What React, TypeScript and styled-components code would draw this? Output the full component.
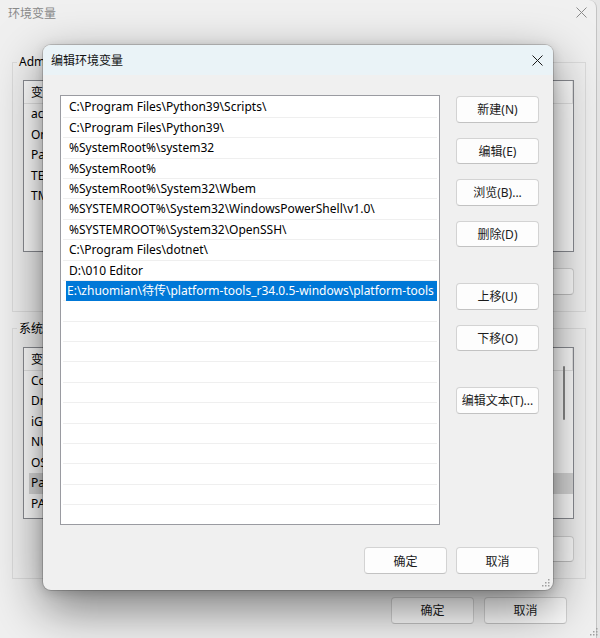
import React from "react";
import styled, { createGlobalStyle } from "styled-components";

const FONT = `"Noto Sans", "Noto Sans CJK SC", sans-serif`;

const GlobalStyle = createGlobalStyle`
  html, body { margin: 0; padding: 0; }
  body {
    width: 600px; height: 638px; overflow: hidden;
    background: #e4e4e4;
    font-family: ${FONT};
    font-size: 12px;
    color: #000;
  }
  * { box-sizing: border-box; }
`;

const Desktop = styled.div`
  position: relative;
  width: 600px;
  height: 638px;
  overflow: hidden;
  background: #e6e6e6;
`;

/* ---------- background window (环境变量) ---------- */

const BgWindow = styled.div`
  width: 597px;
  height: 638px;
  background: #f0f0f0;
  border-right: 1px solid #c4c4c4;
  border-top-right-radius: 8px;
  display: flex;
  flex-direction: column;
`;

const BgTitleBar = styled.div`
  height: 25px;
  flex: none;
  display: flex;
  align-items: center;
  justify-content: space-between;
  padding: 0 9px 0 8px;
  color: #8a8a8a;
  font-size: 12px;
`;

const BgBody = styled.div`
  display: flex;
  flex-direction: column;
  padding: 0 10px 0 12px;
`;

const Group = styled.fieldset<{ $top: number }>`
  margin: ${(p) => p.$top}px 0 0 0;
  border: 1px solid #dcdcdc;
  padding: 10px 11px 16px 10px;
  min-width: 0;
`;

const Legend = styled.legend`
  margin-left: -6px;
  padding: 0 2px;
  line-height: 16px;
  font-size: 12px;
`;

const BgList = styled.div`
  position: relative;
  height: 172px;
  background: #fff;
  border: 1px solid #8a8c92;
  overflow: hidden;
`;

const BgHeader = styled.div`
  display: flex;
  height: 23px;
  border-bottom: 1px solid #e5e5e5;
`;

const BgHeadCell = styled.div<{ $w?: number }>`
  ${(p) => (p.$w ? `width: ${p.$w}px;` : "flex: 1;")}
  padding-left: 7px;
  line-height: 23px;
  border-right: 1px solid #e5e5e5;
`;

const BgRow = styled.div<{ $hl?: boolean }>`
  display: flex;
  height: 20.5px;
  line-height: 20.5px;
  margin-left: 5px;
  background: ${(p) => (p.$hl ? "#d9d9d9" : "transparent")};
`;

const BgCell = styled.div<{ $w?: number }>`
  ${(p) => (p.$w ? `width: ${p.$w}px;` : "flex: 1;")}
  padding-left: 2px;
  white-space: nowrap;
  overflow: hidden;
  text-overflow: clip;
`;

const ScrollThumb = styled.div`
  position: absolute;
  right: 8px;
  top: 18px;
  width: 2px;
  height: 54px;
  border-radius: 1px;
  background: #8a8a8a;
`;

const BtnRow = styled.div<{ $mt: number }>`
  display: flex;
  justify-content: flex-end;
  gap: 10px;
  margin-top: ${(p) => p.$mt}px;
`;

const BgFooter = styled.div`
  display: flex;
  justify-content: flex-end;
  gap: 10px;
  margin-top: 18px;
  padding-right: 19px;
`;

/* ---------- buttons ---------- */

const Button = styled.button<{ $h?: number }>`
  width: 83px;
  height: ${(p) => p.$h ?? 26.5}px;
  padding: 0;
  background: #fdfdfd;
  border: 1px solid #d3d3d3;
  border-bottom-color: #c2c2c2;
  border-radius: 4px;
  font-family: ${FONT};
  font-size: 12px;
  color: #1b1b1b;
  white-space: nowrap;
  flex: none;
`;

/* ---------- dialog (编辑环境变量) ---------- */

const Dialog = styled.div`
  position: absolute;
  left: 43px;
  top: 45px;
  width: 510px;
  height: 545px;
  background: #f0f0f0;
  border-radius: 8px;
  overflow: hidden;
  box-shadow: 0 0 0 1px rgba(0, 0, 0, 0.16), 0 18px 50px rgba(0, 0, 0, 0.5),
    0 2px 12px rgba(0, 0, 0, 0.16);
  display: flex;
  flex-direction: column;
`;

const TitleBar = styled.div`
  height: 30px;
  flex: none;
  display: flex;
  align-items: center;
  justify-content: space-between;
  padding: 0 10px 0 8px;
  background: #eaf3f7;
  font-size: 12px;
  color: #111;
`;

const DialogBody = styled.div`
  display: flex;
  flex-direction: column;
  padding: 20px 14px 16px 17px;
`;

const Main = styled.div`
  display: flex;
  gap: 16px;
`;

const ListBox = styled.div`
  width: 381px;
  height: 430px;
  background: #fff;
  border: 1px solid #9a9ba1;
  padding: 1.4px 1px 0 1px;
  overflow: hidden;
`;

const Row = styled.div`
  display: flex;
  height: 20.4px;
  margin: 0 1px;
  padding-left: 3px;
  border-bottom: 1px solid #efefef;
`;

const RowText = styled.div<{ $sel?: boolean }>`
  flex: 1;
  height: ${(p) => (p.$sel ? "20.4px" : "auto")};
  line-height: 20px;
  padding-left: ${(p) => (p.$sel ? 1 : 3)}px;
  white-space: nowrap;
  overflow: hidden;
  background: ${(p) => (p.$sel ? "#0078d7" : "transparent")};
  color: ${(p) => (p.$sel ? "#fff" : "#000")};
`;

const ButtonCol = styled.div`
  display: flex;
  flex-direction: column;
  gap: 15px;
  padding-top: 1px;
`;

const Spacer = styled.div`
  height: 6px;
`;

const Footer = styled.div`
  display: flex;
  justify-content: flex-end;
  gap: 9px;
  margin-top: 22px;
`;

const Grip = styled.svg`
  position: absolute;
  right: 3px;
  bottom: 3px;
`;

const CloseIcon = ({ color }: { color: string }) => (
  <svg width="11" height="11" viewBox="0 0 11 11">
    <path d="M0.5 0.5 L10.5 10.5 M10.5 0.5 L0.5 10.5" stroke={color} strokeWidth="1" fill="none" />
  </svg>
);

const dots = [
  [6, 0],
  [6, 3],
  [3, 3],
  [6, 6],
  [3, 6],
  [0, 6],
];

const GripDots = ({ offset = 3 }: { offset?: number }) => (
  <Grip width="8" height="8" viewBox="0 0 8 8" style={{ right: offset, bottom: offset }}>
    {dots.map(([x, y], i) => (
      <rect key={i} x={x} y={y} width="1.5" height="1.5" fill="#a0a0a0" />
    ))}
  </Grip>
);

const paths = [
  "C:\\Program Files\\Python39\\Scripts\\",
  "C:\\Program Files\\Python39\\",
  "%SystemRoot%\\system32",
  "%SystemRoot%",
  "%SystemRoot%\\System32\\Wbem",
  "%SYSTEMROOT%\\System32\\WindowsPowerShell\\v1.0\\",
  "%SYSTEMROOT%\\System32\\OpenSSH\\",
  "C:\\Program Files\\dotnet\\",
  "D:\\010 Editor",
  "E:\\zhuomian\\待传\\platform-tools_r34.0.5-windows\\platform-tools",
];
const SELECTED = 9;
const TOTAL_ROWS = 21;

const userVars = [
  ["ac_path", "C:\\tools"],
  ["OneDrive", "C:\\Users\\Admin\\OneDrive"],
  ["Path", "C:\\Users\\Admin\\AppData"],
  ["TEMP", "%USERPROFILE%\\Temp"],
  ["TMP", "%USERPROFILE%\\Temp"],
];

const sysVars = [
  ["ComSpec", "C:\\Windows\\cmd.exe"],
  ["DriverData", "C:\\Windows\\Drivers"],
  ["iGCCEnabled", "1"],
  ["NUMBER_OF_CPUS", "16"],
  ["OS", "Windows_NT"],
  ["Path", "C:\\Python39\\Scripts\\"],
  ["PATHEXT", ".COM;.EXE;.BAT"],
];

export default function App() {
  return (
    <>
      <GlobalStyle />
      <Desktop>
        <BgWindow>
          <BgTitleBar>
            <span>环境变量</span>
            <CloseIcon color="#8a8a8a" />
          </BgTitleBar>
          <BgBody>
            <Group $top={29}>
              <Legend>Administrator 的用户变量(U)</Legend>
              <BgList>
                <BgHeader>
                  <BgHeadCell $w={150}>变量</BgHeadCell>
                  <BgHeadCell>值</BgHeadCell>
                </BgHeader>
                {userVars.map(([k, v]) => (
                  <BgRow key={k}>
                    <BgCell $w={145}>{k}</BgCell>
                    <BgCell>{v}</BgCell>
                  </BgRow>
                ))}
              </BgList>
              <BtnRow $mt={16}>
                <Button>新建(N)...</Button>
                <Button>编辑(E)...</Button>
                <Button>删除(D)</Button>
              </BtnRow>
            </Group>
            <Group $top={9}>
              <Legend>系统变量(S)</Legend>
              <BgList>
                <BgHeader>
                  <BgHeadCell $w={150}>变量</BgHeadCell>
                  <BgHeadCell>值</BgHeadCell>
                </BgHeader>
                {sysVars.map(([k, v]) => (
                  <BgRow key={k} $hl={k === "Path"}>
                    <BgCell $w={145}>{k}</BgCell>
                    <BgCell>{v}</BgCell>
                  </BgRow>
                ))}
                <ScrollThumb />
              </BgList>
              <BtnRow $mt={17}>
                <Button>新建(W)...</Button>
                <Button>编辑(I)...</Button>
                <Button>删除(L)</Button>
              </BtnRow>
            </Group>
            <BgFooter>
              <Button>确定</Button>
              <Button>取消</Button>
            </BgFooter>
          </BgBody>
        </BgWindow>
        <GripDots offset={2} />

        <Dialog>
          <TitleBar>
            <span>编辑环境变量</span>
            <CloseIcon color="#1a1a1a" />
          </TitleBar>
          <DialogBody>
            <Main>
              <ListBox>
                {Array.from({ length: TOTAL_ROWS }).map((_, i) => (
                  <Row key={i}>
                    <RowText $sel={i === SELECTED}>{paths[i] ?? ""}</RowText>
                  </Row>
                ))}
              </ListBox>
              <ButtonCol>
                <Button>新建(N)</Button>
                <Button>编辑(E)</Button>
                <Button>浏览(B)...</Button>
                <Button>删除(D)</Button>
                <Spacer />
                <Button>上移(U)</Button>
                <Button>下移(O)</Button>
                <Spacer />
                <Button>编辑文本(T)...</Button>
              </ButtonCol>
            </Main>
            <Footer>
              <Button $h={27}>确定</Button>
              <Button $h={27}>取消</Button>
            </Footer>
          </DialogBody>
          <GripDots />
        </Dialog>
      </Desktop>
    </>
  );
}
